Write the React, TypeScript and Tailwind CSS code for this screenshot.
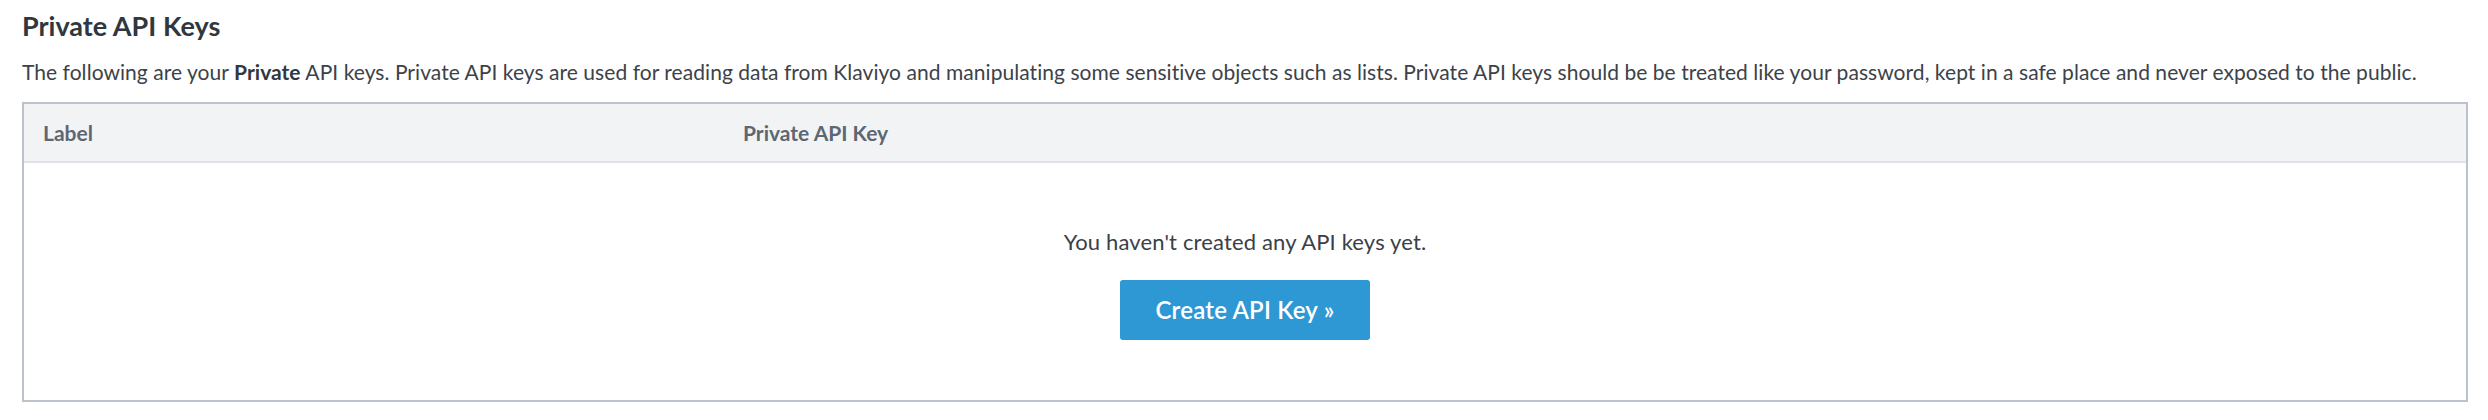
import React from 'react';

const columns = ['Label', 'Private API Key'];

const App: React.FC = () => {
  return (
    <div className="w-[2488px] h-[420px] bg-white pl-[22px] pr-[20px] pt-[10px] font-['Lato','Liberation_Sans',sans-serif] text-[#3a4047]">
      <h2 className="text-[27px] leading-[32px] font-bold text-[#30373e]">Private API Keys</h2>
      <p className="mt-[16px] text-[21px] leading-[28px] tracking-[0.05px] whitespace-nowrap text-[#3c4249]">
        The following are your <span className="font-bold text-[#30373e]">Private</span> API keys. Private API keys are used for reading data from Klaviyo and manipulating some sensitive objects such as lists. Private API keys should be be treated like your password, kept in a safe place and never exposed to the public.
      </p>

      {/* keys table */}
      <div className="mt-[16px] h-[300px] border-2 border-[#bcc2ca] flex flex-col">
        <div className="h-[59px] flex items-center bg-[#f2f3f5] border-b-2 border-[#dfe2e6] text-[21px] font-bold text-[#5d6771]">
          <div className="w-[719px] pl-[19px]">{columns[0]}</div>
          <div>{columns[1]}</div>
        </div>
        <div className="flex-1 flex flex-col items-center pt-[65px]">
          <p className="text-[22px] leading-[28px] tracking-[0.15px] text-[#3a4047]">You haven't created any API keys yet.</p>
          <button className="mt-[24px] w-[250px] h-[60px] rounded-[3px] bg-[#2e98d5] text-white text-[24px] font-semibold tracking-[0.2px]">
            Create API Key »
          </button>
        </div>
      </div>
    </div>
  );
};

export default App;
